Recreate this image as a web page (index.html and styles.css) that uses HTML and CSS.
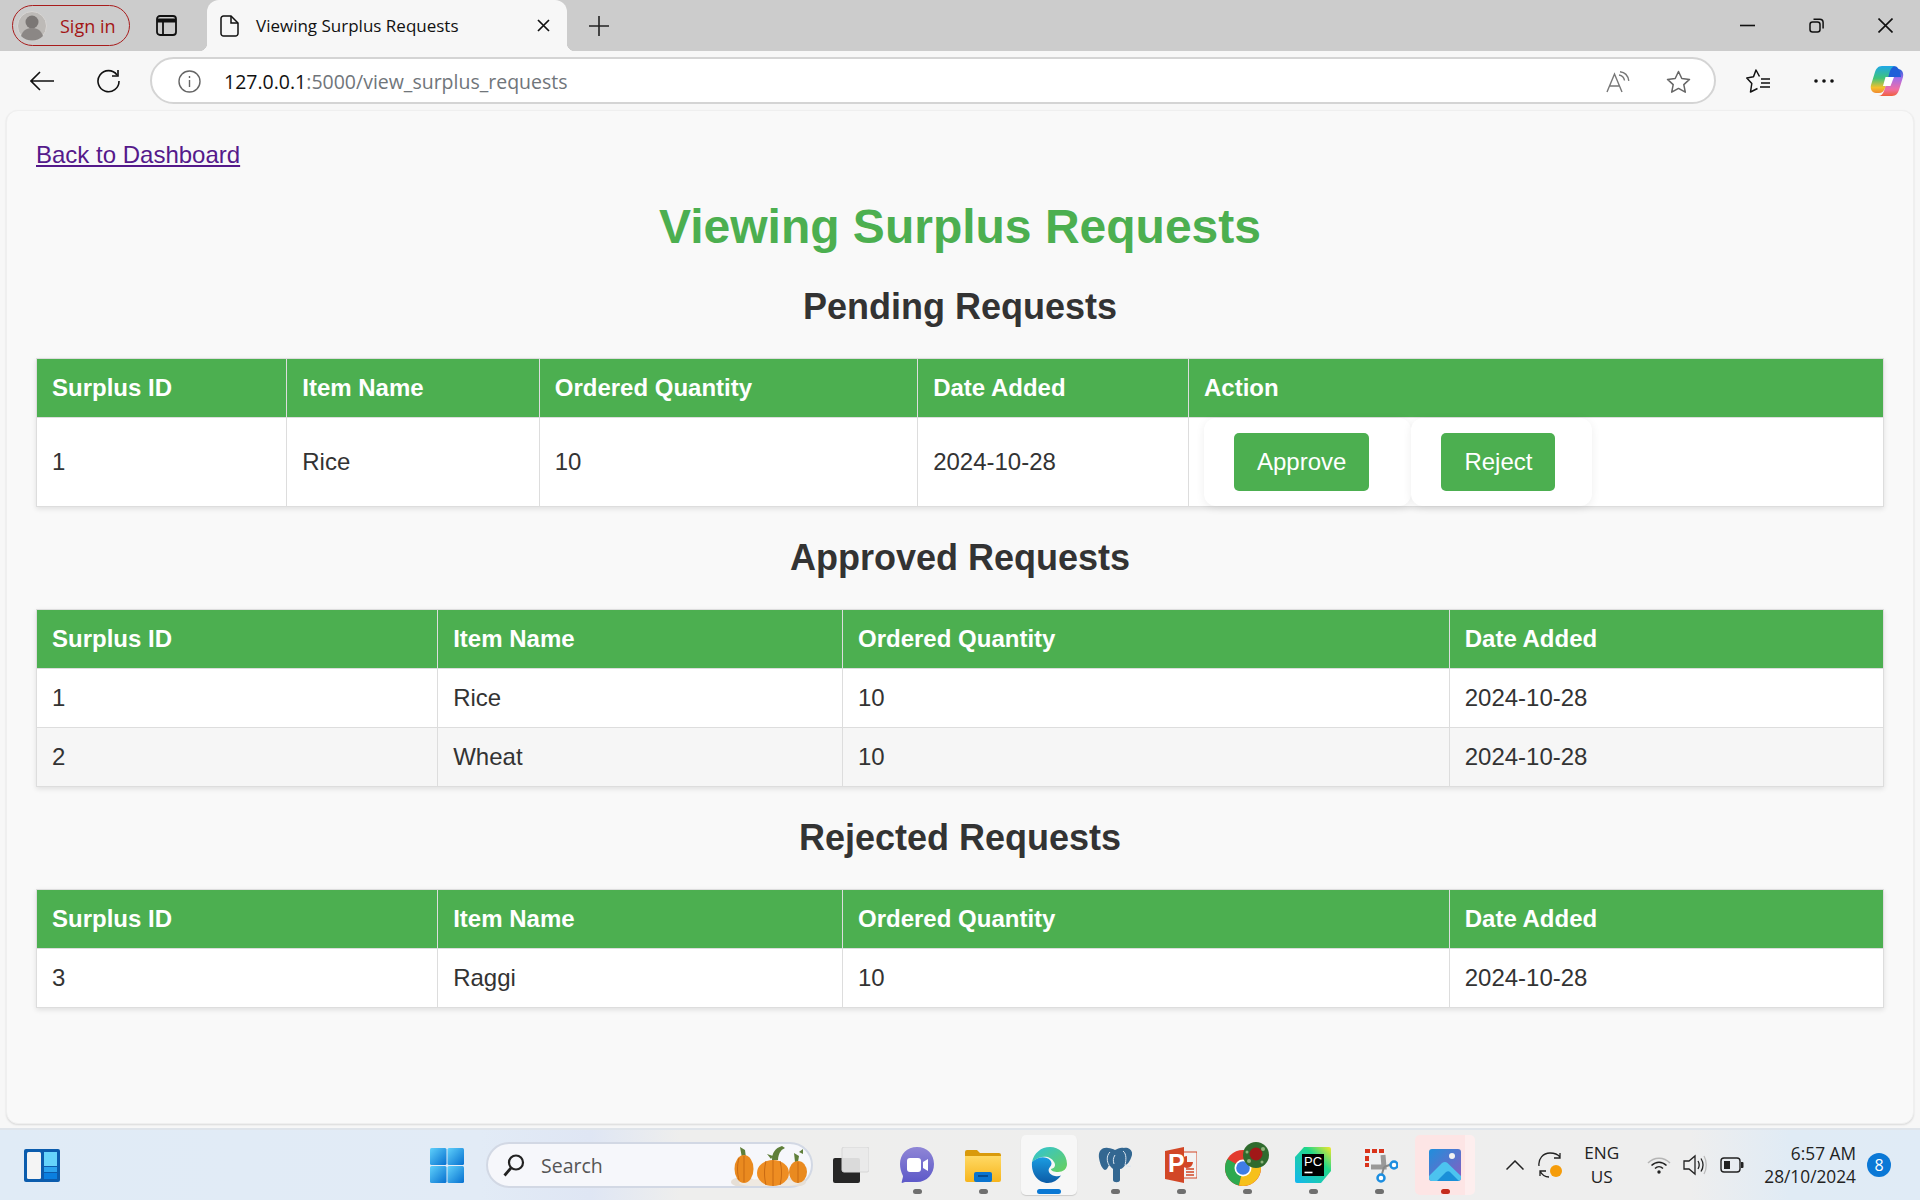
FILE: index.html
```html
<!DOCTYPE html>
<html lang="en">
<head>
    <meta charset="UTF-8">
    <title>Viewing Surplus Requests</title>
    <link rel="stylesheet" href="styles.css">
</head>
<body>
    <svg class="defs" width="0" height="0">
        <defs>
            <linearGradient id="edgeA" x1="0" y1="0" x2="1" y2="1"><stop offset="0" stop-color="#2fc3d8"/><stop offset="1" stop-color="#6ad05a"/></linearGradient>
            <linearGradient id="edgeB" x1="0" y1="0" x2="0" y2="1"><stop offset="0" stop-color="#1b9de2"/><stop offset="1" stop-color="#0c5ba6"/></linearGradient>
            <linearGradient id="folderG" x1="0" y1="0" x2="0" y2="1"><stop offset="0" stop-color="#ffd964"/><stop offset="1" stop-color="#f7b51c"/></linearGradient>
            <linearGradient id="photoG" x1="0" y1="0" x2="1" y2="1"><stop offset="0" stop-color="#1f8fdc"/><stop offset="1" stop-color="#8a5cc0"/></linearGradient>
            <linearGradient id="pcG" x1="0" y1="1" x2="1" y2="0"><stop offset="0" stop-color="#12b6f0"/><stop offset=".65" stop-color="#21d789"/><stop offset="1" stop-color="#f5e82a"/></linearGradient>
            <linearGradient id="startG" x1="0" y1="0" x2="1" y2="1"><stop offset="0" stop-color="#5fd0fb"/><stop offset="1" stop-color="#0670d0"/></linearGradient>
            <linearGradient id="chatG" x1="0" y1="0" x2="0" y2="1"><stop offset="0" stop-color="#8f86d6"/><stop offset="1" stop-color="#5c58c8"/></linearGradient>
            <linearGradient id="copA" x1="0" y1="0" x2="0" y2="1"><stop offset="0" stop-color="#1fa8e8"/><stop offset=".45" stop-color="#3fc47a"/><stop offset=".8" stop-color="#f5c02c"/><stop offset="1" stop-color="#f08a30"/></linearGradient>
            <linearGradient id="copB" x1="0" y1="0" x2="0" y2="1"><stop offset="0" stop-color="#1e5fd8"/><stop offset=".35" stop-color="#a56ee8"/><stop offset=".75" stop-color="#f06fa6"/><stop offset="1" stop-color="#f0603c"/></linearGradient>
        </defs>
    </svg>

    <!-- browser top -->
    <div class="tabstrip">
        <div class="profile">
            <svg class="avatar" width="30" height="30" viewBox="0 0 30 30"><circle cx="15" cy="15" r="14.500" fill="#bdbab7" stroke="#d8d6d4"/><circle cx="15" cy="11" r="6.500" fill="#7b7775"/><path d="M4 25c2-6 6-8 11-8s9 2 11 8c-3 3-7 4.500-11 4.500S7 28 4 25z" fill="#8b8785"/></svg>
            <span>Sign in</span>
        </div>
        <svg class="tab-side" width="21" height="21" viewBox="0 0 21 21" fill="none" stroke="#111" stroke-width="1.800"><rect x="1" y="1" width="19" height="19" rx="3"/><path d="M1 5.500h19" stroke-width="4"/><path d="M7 6v14"/></svg>
        <div class="tab">
            <svg width="19" height="22" viewBox="0 0 19 22" fill="none" stroke="#111" stroke-width="1.500"><path d="M3.500 1h7.500l7 7v10.500a2.500 2.500 0 0 1-2.500 2.500h-12a2.500 2.500 0 0 1-2.500-2.500v-15a2.500 2.500 0 0 1 2.500-2.500z"/><path d="M11 1v7h7"/></svg>
            <span class="tab-title">Viewing Surplus Requests</span>
            <svg width="13" height="13" viewBox="0 0 13 13" stroke="#111" stroke-width="1.700"><path d="M1 1l11 11M12 1L1 12"/></svg>
        </div>
        <svg class="tab-new" width="20" height="20" viewBox="0 0 20 20" stroke="#222" stroke-width="1.600"><path d="M10 0v20M0 10h20"/></svg>
        <div class="win-btns">
            <svg width="15" height="15" viewBox="0 0 15 15" stroke="#111" stroke-width="1.600"><path d="M0 7.500h15"/></svg>
            <svg width="15" height="15" viewBox="0 0 15 15" fill="none" stroke="#111" stroke-width="1.500"><rect x="1" y="4" width="10" height="10" rx="2.500"/><path d="M4.500 1.200h6.300a3.300 3.300 0 0 1 3.300 3.300v6"/></svg>
            <svg width="15" height="15" viewBox="0 0 15 15" stroke="#111" stroke-width="1.600"><path d="M.5.500l14 14M14.500.500l-14 14"/></svg>
        </div>
    </div>

    <div class="toolbar">
        <svg class="tool-back" width="24" height="20" viewBox="0 0 24 20" fill="none" stroke="#111" stroke-width="1.600"><path d="M24 10H1M10 1l-9 9 9 9"/></svg>
        <svg class="tool-reload" width="24" height="24" viewBox="0 0 24 24" fill="none" stroke="#111" stroke-width="1.600"><path d="M21 6a10.500 10.500 0 1 0 2 6"/><path d="M22 1v6h-6"/></svg>
        <div class="addressbar">
            <svg width="23" height="23" viewBox="0 0 23 23" fill="none" stroke="#666" stroke-width="1.400"><circle cx="11.500" cy="11.500" r="10.500"/><path d="M11.500 10v7M11.500 6v2"/></svg>
            <div class="url"><b>127.0.0.1</b>:5000/view_surplus_requests</div>
            <svg class="addr-read" width="24" height="22" viewBox="0 0 24 22" fill="none" stroke="#777" stroke-width="1.400"><path d="M1 21L8.500 3 16 21M4 15h9"/><path d="M13 4c3 .5 5 2.500 5.500 5.500M14 .8c4.500.5 8 4 8.800 9"/></svg>
            <svg class="addr-star" width="25" height="24" viewBox="0 0 25 24" fill="none" stroke="#666" stroke-width="1.500" stroke-linejoin="round"><path d="M12.500 1.500l3.300 7 7.700.9-5.700 5.200 1.500 7.600-6.800-3.800-6.800 3.800 1.500-7.600L1.500 9.400l7.700-.9z"/></svg>
        </div>
        <svg class="tool-favs" width="24" height="24" viewBox="0 0 24 24" fill="none" stroke="#111" stroke-width="1.500" stroke-linejoin="round"><path d="M13.500 7.500L10 1 7.500 7.800.8 9l5 5.500L4.500 23l7-3.500"/><path d="M15 10h9M15 14h9M14 18h10"/></svg>
        <svg class="tool-more" width="20" height="4" viewBox="0 0 20 4" fill="#111"><circle cx="2" cy="2" r="1.800"/><circle cx="10" cy="2" r="1.800"/><circle cx="18" cy="2" r="1.800"/></svg>
        <svg class="tool-copilot" width="34" height="32" viewBox="0 0 34 32">
            <path d="M22 31c4 0 6-3 7-6l4-13c1-4-1-8-5-8h-3c-3 0-5 2-6 5l-5 17c-1 3-3 5-6 5z" fill="url(#copB)"/>
            <path d="M19 1h5c3 0 5 3 6 6l1 5H18z" fill="#1e5fd8"/>
            <path d="M12 1C8 1 6 4 5 7L1 20c-1 4 1 8 5 8h3c3 0 5-2 6-5l5-17c1-3 3-5 6-5z" fill="url(#copA)"/>
            <path d="M15.500 12h8.500l-3.500 9H13z" fill="#fff"/>
        </svg>
    </div>

    <!-- the page itself -->
    <main class="page">
        <a class="back-link" href="#">Back to Dashboard</a>
        <h1>Viewing Surplus Requests</h1>

        <h2>Pending Requests</h2>
        <table>
            <tr>
                <th>Surplus ID</th>
                <th>Item Name</th>
                <th>Ordered Quantity</th>
                <th>Date Added</th>
                <th>Action</th>
            </tr>
            <tr>
                <td>1</td>
                <td>Rice</td>
                <td>10</td>
                <td>2024-10-28</td>
                <td class="action-cell">
                    <div class="actions">
                        <form class="action-form approve-form"><button type="button">Approve</button></form>
                        <form class="action-form reject-form"><button type="button">Reject</button></form>
                    </div>
                </td>
            </tr>
        </table>

        <h2>Approved Requests</h2>
        <table>
            <tr>
                <th>Surplus ID</th>
                <th>Item Name</th>
                <th>Ordered Quantity</th>
                <th>Date Added</th>
            </tr>
            <tr>
                <td>1</td>
                <td>Rice</td>
                <td>10</td>
                <td>2024-10-28</td>
            </tr>
            <tr class="row-alt">
                <td>2</td>
                <td>Wheat</td>
                <td>10</td>
                <td>2024-10-28</td>
            </tr>
        </table>

        <h2>Rejected Requests</h2>
        <table>
            <tr>
                <th>Surplus ID</th>
                <th>Item Name</th>
                <th>Ordered Quantity</th>
                <th>Date Added</th>
            </tr>
            <tr>
                <td>3</td>
                <td>Raggi</td>
                <td>10</td>
                <td>2024-10-28</td>
            </tr>
        </table>
    </main>

    <!-- windows taskbar -->
    <footer class="taskbar">
        <svg class="tb-widgets" width="36" height="33" viewBox="0 0 36 33"><rect width="36" height="33" rx="2" fill="#0b5cad"/><rect x="3" y="3" width="14" height="27" rx="1.500" fill="#f4f4f4"/><rect x="20" y="3" width="13" height="14" fill="#66d4fb"/><rect x="20" y="18" width="13" height="5" fill="#2ba3ee"/><rect x="20" y="24" width="13" height="6" fill="#0a7fe0"/></svg>
        <svg class="tb-start" width="34" height="35" viewBox="0 0 34 35" fill="url(#startG)"><rect width="16.500" height="17" rx="1.500"/><rect x="17.500" width="16.500" height="17" rx="1.500"/><rect y="18" width="16.500" height="17" rx="1.500"/><rect x="17.500" y="18" width="16.500" height="17" rx="1.500"/></svg>
        <div class="searchbox">
            <svg width="22" height="24" viewBox="0 0 22 24" fill="none" stroke="#222" stroke-width="2.200"><circle cx="13" cy="9.500" r="7"/><path d="M8 15l-6.500 7.500" stroke-width="2.800"/></svg>
            <span>Search</span>
            <svg class="pumpkins" width="78" height="42" viewBox="0 0 78 42">
                <ellipse cx="12" cy="38" rx="12" ry="5" fill="#e6dfd6"/>
                <ellipse cx="62" cy="38" rx="13" ry="5" fill="#e6dfd6"/>
                <ellipse cx="38" cy="39" rx="30" ry="4" fill="#efe9e1"/>
                <path d="M11 14L9 3l5 3 1 8zM41 16c0-7 3-12 10-14l3 2c-1 1-3 1-4 3-2 2-3 6-3 9zM36 10l6 2-2 3zM64 18l-1-9 5 3-1 6zM68 8l4-3 0 5z" fill="#5f7f3a"/>
                <ellipse cx="13" cy="25" rx="9.500" ry="14" fill="#ea8a1f"/>
                <ellipse cx="67" cy="28" rx="9" ry="11" fill="#e98a20"/>
                <ellipse cx="42" cy="29" rx="16" ry="13" fill="#ee8d22"/>
                <path d="M35 17c-2 8-2 16 0 24M49 17c2 8 2 16 0 24M42 16v26M13 12v26M8 14c-2 7-2 15 0 22M67 18v21" stroke="#c96a12" stroke-width="1" fill="none"/>
            </svg>
        </div>
        <div class="tb-apps">
            <div class="tb-app">
                <svg width="36" height="36" viewBox="0 0 36 36"><rect y="11" width="27" height="25" rx="2" fill="#262626"/><rect x="9" width="27" height="25" rx="2" fill="#e9e9e9" fill-opacity=".92" stroke="#d6d6d6"/></svg>
            </div>
            <div class="tb-app">
                <svg width="34" height="36" viewBox="0 0 34 36"><path d="M17 0c10 0 17 7 17 17s-7 18-17 18H5l-3 1c-1 0 1-5 1-7C1 25 0 21 0 17 0 7 7 0 17 0z" fill="url(#chatG)"/><rect x="7" y="11" width="14" height="14" rx="3" fill="#fff"/><path d="M23 15l5-3v12l-5-3z" fill="#fff"/></svg>
                <i class="tb-dot"></i>
            </div>
            <div class="tb-app">
                <svg width="36" height="33" viewBox="0 0 36 33"><path d="M0 3a2 2 0 0 1 2-2h10l3 3h19a2 2 0 0 1 2 2v4H0z" fill="#d99a0c"/><path d="M0 7h36v24a2 2 0 0 1-2 2H2a2 2 0 0 1-2-2z" fill="url(#folderG)"/><rect x="9" y="23" width="18" height="10" rx="2" fill="#0a74cf"/><path d="M13 27h10" stroke="#063f7a" stroke-width="1.500"/></svg>
                <i class="tb-dot"></i>
            </div>
            <div class="tb-app tb-app-active">
                <svg width="36" height="36" viewBox="0 0 36 36"><path d="M1 15C3 6 10 0 19 0c9 0 17 7 17 17 0 5-4 8-9 8-4 0-7-1-7-3 4-1 5-4 3-7C20 9 10 7 1 15z" fill="url(#edgeA)"/><path d="M1 15c6-6 14-6 18-2 2 2 2 5 0 7-3 3-1 8 5 9 2 .5 4 .3 6-.5C27 33 22 36 17 36 7 36 0 27 1 15z" fill="url(#edgeB)"/></svg>
                <i class="tb-dot tb-dot-blue"></i>
            </div>
            <div class="tb-app">
                <svg width="34" height="36" viewBox="0 0 34 36"><path d="M10 1C4 0 0 4 1 11c1 6 3 11 6 12 2 0 3-3 4-5 2 2 3 3 4 4v11c0 3 7 3 7 0V22c2 0 4-2 5-4 3 0 6-6 7-10 1-5-4-8-8-7-4-1-6 1-9 2-2-1-4-2-7-2z" fill="#336791"/><path d="M12 5C8 9 9 15 11 18M25 4c4 3 3 10 2 14M27 18c2 1 4 2 6 1M17 8c-2 3-2 6-1 9" stroke="#dce6ef" stroke-width="1" fill="none"/></svg>
                <i class="tb-dot"></i>
            </div>
            <div class="tb-app">
                <svg width="32" height="36" viewBox="0 0 32 36"><rect x="15" y="5" width="17" height="26" fill="#f3f3f3" stroke="#d24726"/><path d="M21 22h8M21 25h8M21 28h8" stroke="#d24726" stroke-width="1.500"/><path d="M22 9a6 6 0 1 0 6 6h-6z" fill="#d24726"/><path d="M0 4l19-4v36L0 32z" fill="#d24726"/><text x="3" y="25" class="ppt-letter">P</text></svg>
                <i class="tb-dot"></i>
            </div>
            <div class="tb-app">
                <svg width="44" height="46" viewBox="0 0 44 46">
                    <circle cx="18" cy="26" r="18" fill="#e33b2e"/>
                    <path d="M2.400 17A18 18 0 0 0 14 43.600L18 26z" fill="#2da94f"/>
                    <path d="M14 43.600A18 18 0 0 0 35.500 22L18 26z" fill="#f6c01c"/>
                    <circle cx="18" cy="26" r="8.500" fill="#fff"/>
                    <circle cx="18" cy="26" r="6.800" fill="#3f7de6"/>
                    <circle cx="31" cy="13" r="13" fill="#2f6b2e"/>
                    <circle cx="31" cy="12" r="6.500" fill="#a01818"/>
                    <circle cx="24" cy="19" r="2" fill="#8fb27a"/>
                    <circle cx="38" cy="7" r="2" fill="#8fb27a"/>
                    <circle cx="22" cy="10" r="1.500" fill="#8fb27a"/>
                    <circle cx="37" cy="20" r="1.500" fill="#8fb27a"/>
                </svg>
                <i class="tb-dot"></i>
            </div>
            <div class="tb-app">
                <svg width="36" height="36" viewBox="0 0 36 36"><path d="M9 0h25a2 2 0 0 1 2 2v22l-10 12H2a2 2 0 0 1-2-2V10z" fill="url(#pcG)"/><rect x="7" y="7" width="22" height="22" fill="#000"/><text x="9" y="19" class="pc-letters">PC</text><path d="M9.500 25.500h8" stroke="#fff" stroke-width="1.600"/></svg>
                <i class="tb-dot"></i>
            </div>
            <div class="tb-app">
                <svg width="37" height="38" viewBox="0 0 37 38" fill="none">
                    <rect x="2" y="1" width="23" height="23" rx="2" fill="#eef0f2"/>
                    <path d="M4 3h5v4H4zM11 3h5v4h-5zM18 3h5v4h-5zM4 10h4v5H4zM4 17h4v4H4z" fill="#d9341c"/>
                    <path d="M22 9l1 12H10" stroke="#999" stroke-width="5"/>
                    <path d="M23 21l8-3M23 21l-2 7" stroke="#888" stroke-width="2"/>
                    <circle cx="33" cy="19" r="3.500" stroke="#1c8ee0" stroke-width="2.500" fill="#fff"/>
                    <circle cx="20" cy="32" r="3.500" stroke="#1c8ee0" stroke-width="2.500" fill="#fff"/>
                </svg>
                <i class="tb-dot"></i>
            </div>
            <div class="tb-app tb-app-flagged">
                <svg width="32" height="32" viewBox="0 0 32 32"><rect width="32" height="32" rx="3" fill="url(#photoG)"/><circle cx="23" cy="7" r="3" fill="#f2f2f2"/><path d="M0 27l13-13c2-1.500 4-1.500 5.500 0L32 27v2a3 3 0 0 1-3 3H3a3 3 0 0 1-3-3z" fill="#4cc3ef"/><path d="M8 32l9-9c1.500-1 3-1 4 0l9 9z" fill="#1a8fd8"/></svg>
                <i class="tb-dot tb-dot-red"></i>
            </div>
        </div>
        <div class="tray">
            <svg class="tray-chevron" width="18" height="10" viewBox="0 0 18 10" fill="none" stroke="#222" stroke-width="1.500"><path d="M.5 9.500L9 1l8.500 8.500"/></svg>
            <svg class="tray-sync" width="24" height="26" viewBox="0 0 24 26" fill="none" stroke="#222" stroke-width="1.300"><path d="M1 14C0 7 5 1 12 1c4 0 8 1.500 10 4M22 1v5h-6M2 24v-5h6M2 19c2 4 5 6 9 6"/><circle cx="18" cy="19" r="6" fill="#f59c0a" stroke="none"/></svg>
            <div class="tray-lang"><span>ENG</span><span>US</span></div>
            <svg class="tray-wifi" width="24" height="18" viewBox="0 0 24 18" fill="none" stroke="#222" stroke-width="1.500"><path d="M1 7c6-6.500 16-6.500 22 0" stroke="#b5b5b5"/><path d="M4.500 9.500c4.500-4.500 10.500-4.500 15 0M8 12.500c2.500-2.500 5.500-2.500 8 0"/><circle cx="12" cy="16" r="1.700" fill="#222" stroke="none"/></svg>
            <svg class="tray-sound" width="24" height="22" viewBox="0 0 24 22" fill="none" stroke="#222" stroke-width="1.300"><path d="M1 7h5l6-5v18l-6-5H1z"/><path d="M15 7c1.500 2.500 1.500 5.500 0 8M18 4.500c2.500 4 2.500 9 0 13"/><path d="M21 2c3 5 3 13 0 18" stroke="#bbb"/></svg>
            <svg class="tray-battery" width="24" height="16" viewBox="0 0 24 16" fill="none" stroke="#222" stroke-width="1.400"><rect x="1" y="1" width="19" height="14" rx="3"/><rect x="4" y="4" width="6" height="8" fill="#222" stroke="none"/><path d="M21 5h1.500a1 1 0 0 1 1 1v4a1 1 0 0 1-1 1H21z" fill="#222" stroke="none"/></svg>
            <div class="tray-clock"><span>6:57 AM</span><span>28/10/2024</span></div>
            <div class="tray-badge">8</div>
        </div>
    </footer>
</body>
</html>
```

FILE: styles.css
```css
html, body {
    margin: 0;
    padding: 0;
}
body {
    width: 1920px;
    height: 1200px;
    overflow: hidden;
    display: flex;
    flex-direction: column;
    background-color: #f7f7f7;
    font-family: 'Liberation Sans', Arial, sans-serif;
    color: #333;
}
svg {
    display: block;
    flex-shrink: 0;
}
.defs {
    position: absolute;
}

/* browser tabs */
.tabstrip {
    height: 51px;
    flex-shrink: 0;
    background-color: #cccccc;
    display: flex;
    align-items: center;
    font-family: 'Open Sans', sans-serif;
}
.profile {
    width: 118px;
    height: 41px;
    box-sizing: border-box;
    margin-left: 12px;
    border: 1.5px solid #a81c1c;
    border-radius: 21px;
    display: flex;
    align-items: center;
    padding-left: 4px;
    gap: 13px;
    color: #a31515;
    font-size: 18px;
}
.tab-side {
    margin-left: 26px;
}
.tab {
    position: relative;
    width: 360px;
    height: 51px;
    box-sizing: border-box;
    margin-left: 30px;
    padding: 0 17px 0 13px;
    background-color: #f7f7f7;
    border-radius: 12px 12px 0 0;
    display: flex;
    align-items: center;
    color: #111;
    font-size: 17px;
}
.tab::before, .tab::after {
    content: '';
    position: absolute;
    bottom: 0;
    width: 8px;
    height: 8px;
}
.tab::before {
    left: -8px;
    background: radial-gradient(circle at 0 0, #ccc 8px, #f7f7f7 8.5px);
}
.tab::after {
    right: -8px;
    background: radial-gradient(circle at 100% 0, #ccc 8px, #f7f7f7 8.5px);
}
.tab-title {
    flex: 1;
    margin-left: 17px;
    white-space: nowrap;
}
.tab-new {
    margin-left: 22px;
}
.win-btns {
    margin-left: auto;
    margin-right: 27px;
    display: flex;
    gap: 54px;
}

/* address bar row */
.toolbar {
    height: 59px;
    flex-shrink: 0;
    display: flex;
    align-items: center;
    font-family: 'Open Sans', sans-serif;
}
.tool-back {
    margin-left: 30px;
}
.tool-reload {
    margin-left: 42px;
}
.addressbar {
    width: 1566px;
    height: 47px;
    box-sizing: border-box;
    margin-left: 30px;
    padding: 2px 23px 0 26px;
    background-color: #fff;
    border: 2px solid #d4d4d4;
    border-radius: 24px;
    display: flex;
    align-items: center;
}
.url {
    flex: 1;
    margin-left: 23px;
    font-size: 19.5px;
    color: #70757a;
    white-space: nowrap;
}
.url b {
    font-weight: 400;
    color: #111;
}
.addr-star {
    margin-left: 36px;
}
.tool-favs {
    margin-left: 30px;
}
.tool-more {
    margin-left: 44px;
}
.tool-copilot {
    margin-left: 36px;
}

/* page */
.page {
    flex: 1;
    min-height: 0;
    box-sizing: border-box;
    margin: 0 6px 4px 6px;
    padding: 30px 29px;
    background-color: #f9f9f9;
    border: 1px solid #efefef;
    border-radius: 12px;
    box-shadow: 0 1px 2px rgba(0, 0, 0, 0.12);
}
.back-link {
    display: block;
    width: fit-content;
    color: #551a8b;
    font-size: 24px;
    line-height: 28px;
}
h1 {
    margin: 30px 0 32px;
    color: #4CAF50;
    font-size: 48px;
    line-height: 55px;
    text-align: center;
}
h2 {
    margin: 30px 0 31px;
    color: #333;
    font-size: 36px;
    line-height: 41px;
    text-align: center;
}
table {
    width: 100%;
    border-collapse: collapse;
    background-color: #fff;
    box-shadow: 0 2px 5px rgba(0, 0, 0, 0.1);
    font-size: 24px;
}
th, td {
    padding: 15px;
    border: 1px solid #ddd;
    text-align: left;
}
th {
    background-color: #4CAF50;
    color: #fff;
}
.row-alt td {
    background-color: #f6f6f6;
}
.action-cell {
    padding: 0 15px;
}
.actions {
    display: flex;
}
.action-form {
    height: 88px;
    box-sizing: border-box;
    padding: 15px 0 0 30px;
    background-color: #fff;
    border-radius: 12px;
    box-shadow: 0 2px 10px rgba(0, 0, 0, 0.07);
}
.approve-form {
    padding-right: 42px;
}
.reject-form {
    padding-right: 37px;
}
.action-form button {
    display: block;
    height: 58px;
    padding: 0 23px;
    border: none;
    border-radius: 5px;
    background-color: #4CAF50;
    color: #fff;
    font-family: inherit;
    font-size: 24px;
}

/* windows taskbar */
.taskbar {
    height: 72px;
    flex-shrink: 0;
    box-sizing: border-box;
    border-top: 2px solid #dfe4ea;
    background: linear-gradient(90deg, #e0ebf6 0, #e2ebf6 480px, #dfe6f4 590px, #eeeeed 680px, #eeeeee 1690px, #e0ebf5 1790px, #e0ebf6 1920px);
    display: flex;
    align-items: center;
    font-family: 'Open Sans', sans-serif;
    font-size: 19.5px;
    color: #222;
}
.tb-widgets {
    margin-left: 24px;
}
.tb-start {
    margin-left: 370px;
}
.searchbox {
    position: relative;
    width: 327px;
    height: 46px;
    box-sizing: border-box;
    margin-left: 22px;
    padding-left: 15px;
    background-color: #f6f7fb;
    border: 2px solid #d2d8e4;
    border-radius: 23px;
    display: flex;
    align-items: center;
    gap: 16px;
    color: #555;
}
.pumpkins {
    position: absolute;
    right: 2px;
    bottom: 0;
}
.tb-apps {
    margin-left: 5px;
    display: flex;
}
.tb-app {
    position: relative;
    width: 66px;
    height: 60px;
    box-sizing: border-box;
    display: flex;
    align-items: center;
    justify-content: center;
    border-radius: 5px;
}
.tb-app-active {
    background-color: #f7f7f7;
    box-shadow: 0 1px 1px rgba(0, 0, 0, 0.15);
    width: 56px;
    margin: 0 5px;
}
.tb-app-flagged {
    background: linear-gradient(90deg, #fde5e5 50px, #fdeeee 50px);
    width: 60px;
    margin-left: 3px;
}
.tb-dot {
    position: absolute;
    left: 50%;
    bottom: 1px;
    width: 9px;
    height: 5px;
    margin-left: -4px;
    border-radius: 3px;
    background-color: #6f6f6f;
}
.tb-dot-blue {
    width: 24px;
    margin-left: -12px;
    background-color: #0a78d4;
}
.tb-dot-red {
    background-color: #c42b1c;
}
.ppt-letter {
    font-family: 'Liberation Sans', sans-serif;
    font-size: 25px;
    font-weight: bold;
    fill: #fff;
}
.pc-letters {
    font-family: 'Liberation Sans', sans-serif;
    font-size: 13px;
    fill: #fff;
}
.tray {
    margin-left: auto;
    display: flex;
    align-items: center;
}
.tray-lang {
    display: flex;
    flex-direction: column;
    align-items: center;
    margin-left: 22px;
    font-size: 17.2px;
    line-height: 24px;
}
.tray-sync {
    margin-left: 14px;
}
.tray-wifi {
    margin-left: 28px;
}
.tray-sound {
    margin-left: 12px;
}
.tray-battery {
    margin-left: 13px;
}
.tray-clock {
    display: flex;
    flex-direction: column;
    align-items: flex-end;
    margin-left: 20px;
    font-size: 17.3px;
    line-height: 23px;
}
.tray-badge {
    width: 24px;
    height: 24px;
    margin: 0 29px 0 11px;
    border-radius: 50%;
    background-color: #0b78d6;
    color: #fff;
    font-size: 16px;
    line-height: 24px;
    text-align: center;
}
```
